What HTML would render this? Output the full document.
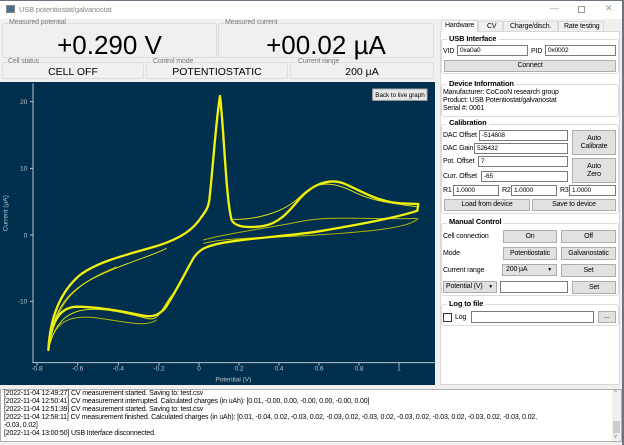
<!DOCTYPE html><html><head><style>
*{margin:0;padding:0;box-sizing:border-box}
body{width:624px;height:445px;overflow:hidden;background:#f0f0f0;font-family:"Liberation Sans",sans-serif;font-size:7px;letter-spacing:-0.15px;color:#000;position:relative}
.a{position:absolute}
.box{position:absolute;border:1px solid #dcdcdc;border-radius:2px;background:#f0f0f0}
.lbl{position:absolute;color:#777;font-size:7px;background:#f0f0f0;padding:0 1px}
.in{position:absolute;background:#fff;border:1px solid #7a7a7a;font-size:6.5px;padding-left:2px;line-height:9px}
.btn{position:absolute;background:#e1e1e1;border:1px solid #adadad;text-align:center;font-size:7px}
.grp{position:absolute;border:1px solid #dcdcdc;border-radius:3px}
.gt{position:absolute;font-weight:bold;font-size:7.5px;background:#fff;padding:0 2px}
.t{position:absolute;font-size:7px;white-space:nowrap}
</style></head><body>
<div class="a" style="left:0;top:0;width:624px;height:19px;background:#fff;border-top:1px solid #6b7580"></div>
<div class="a" style="left:6px;top:5px;width:9px;height:8px;background:#4a6f8f;border:1px solid #888"></div>
<div class="t" style="left:19px;top:5px;color:#888;font-size:7.5px">USB potentiostat/galvanostat</div>
<div class="t" style="left:550px;top:3px;color:#999;font-size:9px">—</div>
<div class="a" style="left:578px;top:6px;width:7px;height:7px;border:1px solid #999"></div>
<div class="t" style="left:605px;top:3px;color:#999;font-size:9px">✕</div>
<div class="a" style="left:622px;top:0;width:2px;height:445px;background:#6b7580"></div>

<div class="box" style="left:2px;top:23px;width:215px;height:35px"></div>
<div class="lbl" style="left:8px;top:19px">Measured potential</div>
<div class="t" style="left:0;width:219px;text-align:center;top:30px;font-size:26px;letter-spacing:0">+0.290 V</div>
<div class="box" style="left:218px;top:23px;width:216px;height:35px"></div>
<div class="lbl" style="left:224px;top:19px">Measured current</div>
<div class="t" style="left:218px;width:216px;text-align:center;top:30px;font-size:26px;letter-spacing:0">+00.02 µA</div>

<div class="box" style="left:2px;top:62px;width:142px;height:17px"></div>
<div class="lbl" style="left:7px;top:58px">Cell status</div>
<div class="t" style="left:2px;width:142px;text-align:center;top:66px;font-size:10.5px;letter-spacing:0">CELL OFF</div>
<div class="box" style="left:146px;top:62px;width:142px;height:17px"></div>
<div class="lbl" style="left:152px;top:58px">Control mode</div>
<div class="t" style="left:146px;width:142px;text-align:center;top:66px;font-size:10.5px;letter-spacing:0">POTENTIOSTATIC</div>
<div class="box" style="left:290px;top:62px;width:144px;height:17px"></div>
<div class="lbl" style="left:297px;top:58px">Current range</div>
<div class="t" style="left:290px;width:144px;text-align:center;top:66px;font-size:10.5px;letter-spacing:0">200 µA</div>

<svg class="a" style="left:0;top:82px" width="435" height="303" viewBox="0 6 1305 909">
<rect x="0" y="0" width="1305" height="920" fill="#00304d"/>
<g stroke="#b8c4cc" stroke-width="3" fill="none"><path d="M99 10V848H1305"/>
<path d="M90 65h9M90 265h9M90 465h9M90 664h9M111 848v9M233 848v9M355 848v9M477 848v9M597 848v9M717 848v9M837 848v9M957 848v9M1077 848v9M1197 848v9"/></g>
<g fill="#b8c4cc" font-size="20" font-family="Liberation Sans">
<text x="82" y="72" text-anchor="end">20</text><text x="82" y="272" text-anchor="end">10</text><text x="82" y="472" text-anchor="end">0</text><text x="82" y="671" text-anchor="end">-10</text>
<text x="111" y="872" text-anchor="middle">-0.8</text><text x="233" y="872" text-anchor="middle">-0.6</text><text x="355" y="872" text-anchor="middle">-0.4</text><text x="477" y="872" text-anchor="middle">-0.2</text><text x="597" y="872" text-anchor="middle">0</text><text x="717" y="872" text-anchor="middle">0.2</text><text x="837" y="872" text-anchor="middle">0.4</text><text x="957" y="872" text-anchor="middle">0.6</text><text x="1077" y="872" text-anchor="middle">0.8</text><text x="1197" y="872" text-anchor="middle">1</text>
<text x="700" y="905" text-anchor="middle">Potential (V)</text>
<text transform="translate(22 400) rotate(-90)" text-anchor="middle">Current (µA)</text></g>
<g fill="none" stroke="#b5b50a" stroke-width="3">
<path d="M610 480C680 460 800 445 900 425S1100 420 1250 415"/>
<path d="M1255 415C1230 445 1100 455 950 465S700 470 610 490"/>
<path d="M145 810C160 730 200 700 300 715S440 740 470 720"/>
<path d="M145 800C170 660 230 610 350 560"/>
</g>
<g fill="none" stroke="#f2f20a" stroke-width="7" stroke-linejoin="round">
<path d="M145 810C150 720 175 640 240 585C300 540 400 520 480 495C540 475 580 450 605 410C620 390 625 380 628 360C640 250 648 120 660 48C672 150 678 360 695 420C705 440 740 445 790 438C840 430 870 390 900 355C940 310 990 295 1030 310C1080 330 1130 365 1200 370L1255 372L1252 392C1200 410 1100 430 950 455C850 470 700 478 640 495C610 503 595 512 580 535C560 570 525 640 495 685C470 712 450 712 420 705C360 692 280 680 230 680C180 682 155 720 145 810Z"/>
</g>
<g fill="none" stroke="#e0e010" stroke-width="3">
<path d="M145 800C160 690 200 630 300 585S450 530 500 505"/>
<path d="M150 790C165 740 190 700 250 690S400 705 440 715S480 690 520 640"/>
<path d="M700 418C760 420 850 400 900 350S1000 305 1060 335S1180 370 1250 380"/>
</g>
<rect x="1118" y="27" width="163" height="34" fill="#e8e8e8" stroke="#adadad" stroke-width="3"/>
<text x="1200" y="51" text-anchor="middle" font-size="19" font-family="Liberation Sans" fill="#000">Back to live graph</text>
</svg>

<div class="a" style="left:0;top:389px;width:622px;height:53px;background:#fff;border:1px solid #b0b0b0"></div>
<div class="a" style="left:612px;top:390px;width:9px;height:51px;background:#f0f0f0"></div>
<div class="a" style="left:613px;top:421px;width:7px;height:12px;background:#cdcdcd"></div>
<div class="t" style="left:614px;top:390px;font-size:6px;color:#777">^</div>
<div class="t" style="left:614px;top:434px;font-size:6px;color:#777">v</div>
<div class="a" style="left:4px;top:390px;font-size:7px;line-height:8.1px;white-space:nowrap">
[2022-11-04 12:49:27] CV measurement started. Saving to: test.csv<br>
[2022-11-04 12:50:41] CV measurement interrupted. Calculated charges (in uAh): [0.01, -0.00, 0.00, -0.00, 0.00, -0.00, 0.00]<br>
[2022-11-04 12:51:39] CV measurement started. Saving to: test.csv<br>
[2022-11-04 12:58:11] CV measurement finished. Calculated charges (in uAh): [0.01, -0.04, 0.02, -0.03, 0.02, -0.03, 0.02, -0.03, 0.02, -0.03, 0.02, -0.03, 0.02, -0.03, 0.02, -0.03, 0.02,<br>
-0.03, 0.02]<br>
[2022-11-04 13:00:50] USB Interface disconnected.</div>

<div class="a" style="left:440px;top:31px;width:180px;height:354px;background:#fff;border:1px solid #d9d9d9"></div>
<div class="a" style="left:441px;top:20px;width:37px;height:12px;background:#fff;border:1px solid #d9d9d9;border-bottom:none"></div>
<div class="t" style="left:445px;top:22px">Hardware</div>
<div class="a" style="left:478px;top:21px;width:25px;height:11px;background:#f0f0f0;border:1px solid #d9d9d9"></div>
<div class="t" style="left:487px;top:23px">CV</div>
<div class="a" style="left:503px;top:21px;width:55px;height:11px;background:#f0f0f0;border:1px solid #d9d9d9"></div>
<div class="t" style="left:510px;top:23px">Charge/disch.</div>
<div class="a" style="left:558px;top:21px;width:46px;height:11px;background:#f0f0f0;border:1px solid #d9d9d9"></div>
<div class="t" style="left:564px;top:23px">Rate testing</div>

<div class="grp" style="left:441px;top:39px;width:178px;height:35px"></div>
<div class="gt" style="left:447px;top:34px">USB Interface</div>
<div class="t" style="left:443px;top:48px">VID</div><div class="in" style="left:457px;top:45px;width:71px;height:11px">0xa0a0</div>
<div class="t" style="left:531px;top:48px">PID</div><div class="in" style="left:545px;top:45px;width:71px;height:11px">0x0002</div>
<div class="btn" style="left:444px;top:60px;width:172px;height:12px;line-height:10px">Connect</div>

<div class="grp" style="left:441px;top:84px;width:178px;height:33px"></div>
<div class="gt" style="left:447px;top:79px">Device Information</div>
<div class="t" style="left:443px;top:89px;line-height:8px">Manufacturer: CoCooN research group<br>Product: USB Potentiostat/galvanostat<br>Serial #: 0001</div>

<div class="grp" style="left:441px;top:124px;width:178px;height:90px"></div>
<div class="gt" style="left:447px;top:118px">Calibration</div>
<div class="t" style="left:443px;top:132px">DAC Offset</div><div class="in" style="left:479px;top:130px;width:89px;height:11px">-514808</div>
<div class="t" style="left:443px;top:145px">DAC Gain</div><div class="in" style="left:474px;top:143px;width:94px;height:11px">526432</div>
<div class="t" style="left:443px;top:158px">Pot. Offset</div><div class="in" style="left:478px;top:156px;width:90px;height:11px">7</div>
<div class="t" style="left:443px;top:173px">Curr. Offset</div><div class="in" style="left:481px;top:171px;width:87px;height:11px">-65</div>
<div class="btn" style="left:572px;top:130px;width:44px;height:25px;padding-top:4px;line-height:8px">Auto<br>Calibrate</div>
<div class="btn" style="left:572px;top:158px;width:44px;height:25px;padding-top:4px;line-height:8px">Auto<br>Zero</div>
<div class="t" style="left:443px;top:187px">R1</div><div class="in" style="left:453px;top:185px;width:46px;height:11px">1.0000</div>
<div class="t" style="left:502px;top:187px">R2</div><div class="in" style="left:511px;top:185px;width:46px;height:11px">1.0000</div>
<div class="t" style="left:560px;top:187px">R3</div><div class="in" style="left:569px;top:185px;width:47px;height:11px">1.0000</div>
<div class="btn" style="left:444px;top:199px;width:86px;height:12px;line-height:10px">Load from device</div>
<div class="btn" style="left:532px;top:199px;width:84px;height:12px;line-height:10px">Save to device</div>

<div class="grp" style="left:441px;top:223px;width:178px;height:73px"></div>
<div class="gt" style="left:447px;top:217px">Manual Control</div>
<div class="t" style="left:443px;top:233px">Cell connection</div>
<div class="btn" style="left:503px;top:230px;width:54px;height:13px;line-height:11px">On</div>
<div class="btn" style="left:561px;top:230px;width:55px;height:13px;line-height:11px">Off</div>
<div class="t" style="left:443px;top:250px">Mode</div>
<div class="btn" style="left:503px;top:247px;width:54px;height:13px;line-height:11px">Potentiostatic</div>
<div class="btn" style="left:561px;top:247px;width:55px;height:13px;line-height:11px">Galvanostatic</div>
<div class="t" style="left:443px;top:267px">Current range</div>
<div class="btn" style="left:502px;top:264px;width:55px;height:12px;line-height:10px;text-align:left;padding-left:3px">200 µA<span style="position:absolute;right:4px;font-size:5px">▼</span></div>
<div class="btn" style="left:561px;top:264px;width:55px;height:13px;line-height:11px">Set</div>
<div class="btn" style="left:443px;top:281px;width:54px;height:12px;line-height:10px;text-align:left;padding-left:2px">Potential (V)<span style="position:absolute;right:3px;font-size:5px">▼</span></div>
<div class="in" style="left:500px;top:281px;width:68px;height:12px"></div>
<div class="btn" style="left:572px;top:281px;width:44px;height:13px;line-height:11px">Set</div>

<div class="grp" style="left:441px;top:304px;width:178px;height:22px"></div>
<div class="gt" style="left:447px;top:299px">Log to file</div>
<div class="a" style="left:443px;top:313px;width:9px;height:9px;border:1px solid #333;background:#fff"></div>
<div class="t" style="left:455px;top:314px">Log</div>
<div class="in" style="left:471px;top:311px;width:123px;height:12px"></div>
<div class="btn" style="left:598px;top:311px;width:18px;height:12px;line-height:9px">...</div>
</body></html>
